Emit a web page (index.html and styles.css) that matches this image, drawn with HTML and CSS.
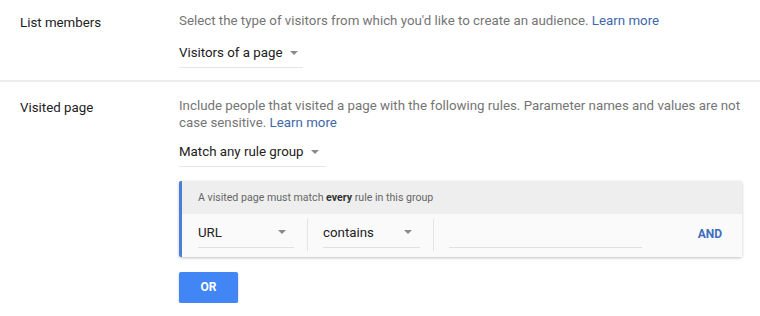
FILE: index.html
```html
<!DOCTYPE html>
<html lang="en">
<head>
  <meta charset="UTF-8" />
  <title>Audience</title>
  <link rel="stylesheet" href="styles.css">
</head>
<body>
  <div class="section">
    <div class="label">List members</div>
    <div class="content">
      <div class="desc">Select the type of visitors from which you'd like to create an audience. <a href="#">Learn more</a></div>
      <div class="select select-visitors">Visitors of a page <span class="arrow"></span></div>
    </div>
  </div>
  <div class="divider"></div>
  <div class="section section-visited">
    <div class="label">Visited page</div>
    <div class="content">
      <div class="desc">Include people that visited a page with the following rules. Parameter names and values are not case sensitive. <a href="#">Learn more</a></div>
      <div class="select select-match">Match any rule group <span class="arrow"></span></div>
      <div class="rule-card">
        <div class="rule-head">A visited page must match <b>every</b> rule in this group</div>
        <div class="rule-row">
          <div class="field field-url">URL <span class="arrow"></span></div>
          <div class="sep"></div>
          <div class="field field-op">contains <span class="arrow"></span></div>
          <div class="sep"></div>
          <div class="field field-value"></div>
          <div class="and">AND</div>
        </div>
      </div>
      <button class="or-btn">OR</button>
    </div>
  </div>
</body>
</html>
```
FILE: styles.css
```css
body {
  margin: 0;
  font-family: Roboto, 'Liberation Sans', sans-serif;
  background: #fff;
  color: #212121;
  font-size: 13.3px;
}
a {
  color: #3d68a8;
  text-decoration: none;
}
.section {
  display: flex;
  padding: 12px 0 0 20px;
}
.section-visited {
  padding-top: 15px;
}
.label {
  width: 159px;
  flex-shrink: 0;
  line-height: 17px;
  padding-top: 2px;
}
.content {
  flex: 1;
  padding-right: 19px;
}
.desc {
  color: #757575;
  line-height: 17.5px;
  width: 570px;
}
.select {
  display: inline-flex;
  align-items: center;
  margin-top: 14px;
  padding-bottom: 5px;
  border-bottom: 1px solid #e6e6e6;
  line-height: 18px;
}
.select-visitors {
  width: 124px;
}
.select-match {
  width: 147px;
  margin-top: 11px;
}
.arrow {
  display: inline-block;
  margin-left: 7px;
  border-left: 4px solid transparent;
  border-right: 4px solid transparent;
  border-top: 4px solid #8a8a8a;
}
.divider {
  height: 2px;
  background: #ededed;
  margin-top: 12px;
}
.rule-card {
  margin-top: 14px;
  width: 560px;
  border-left: 3px solid #4a7fd8;
  border-radius: 2px;
  box-shadow: 0 1px 3px rgba(0, 0, 0, 0.25);
}
.rule-head {
  background: #eeeeee;
  font-size: 10.6px;
  color: #666;
  height: 33px;
  line-height: 33px;
  padding-left: 16px;
}
.rule-head b {
  color: #333;
}
.rule-row {
  display: flex;
  align-items: flex-start;
  background: #fafafa;
  height: 43px;
  padding-left: 16px;
}
.field {
  display: flex;
  align-items: center;
  justify-content: space-between;
  height: 34px;
  box-sizing: border-box;
  border-bottom: 1px solid #e0e0e0;
  padding-right: 8px;
  padding-top: 4px;
}
.field .arrow {
  margin-left: 0;
}
.field-url {
  width: 96px;
}
.field-op {
  width: 97px;
}
.field-value {
  width: 193px;
}
.sep {
  width: 1px;
  height: 32px;
  margin: 5px 15px 0 13px;
  background: #e4e4e4;
}
.and {
  margin-left: auto;
  margin-right: 20px;
  margin-top: 13px;
  color: #3d6fbf;
  font-weight: bold;
  font-size: 12px;
}
.or-btn {
  display: block;
  margin-top: 15px;
  width: 59px;
  height: 31px;
  background: #4285f4;
  color: #fff;
  border: none;
  border-radius: 2px;
  font-family: Roboto, 'Liberation Sans', sans-serif;
  font-weight: bold;
  font-size: 12px;
  box-shadow: 0 1px 2px rgba(0, 0, 0, 0.3);
}
```
